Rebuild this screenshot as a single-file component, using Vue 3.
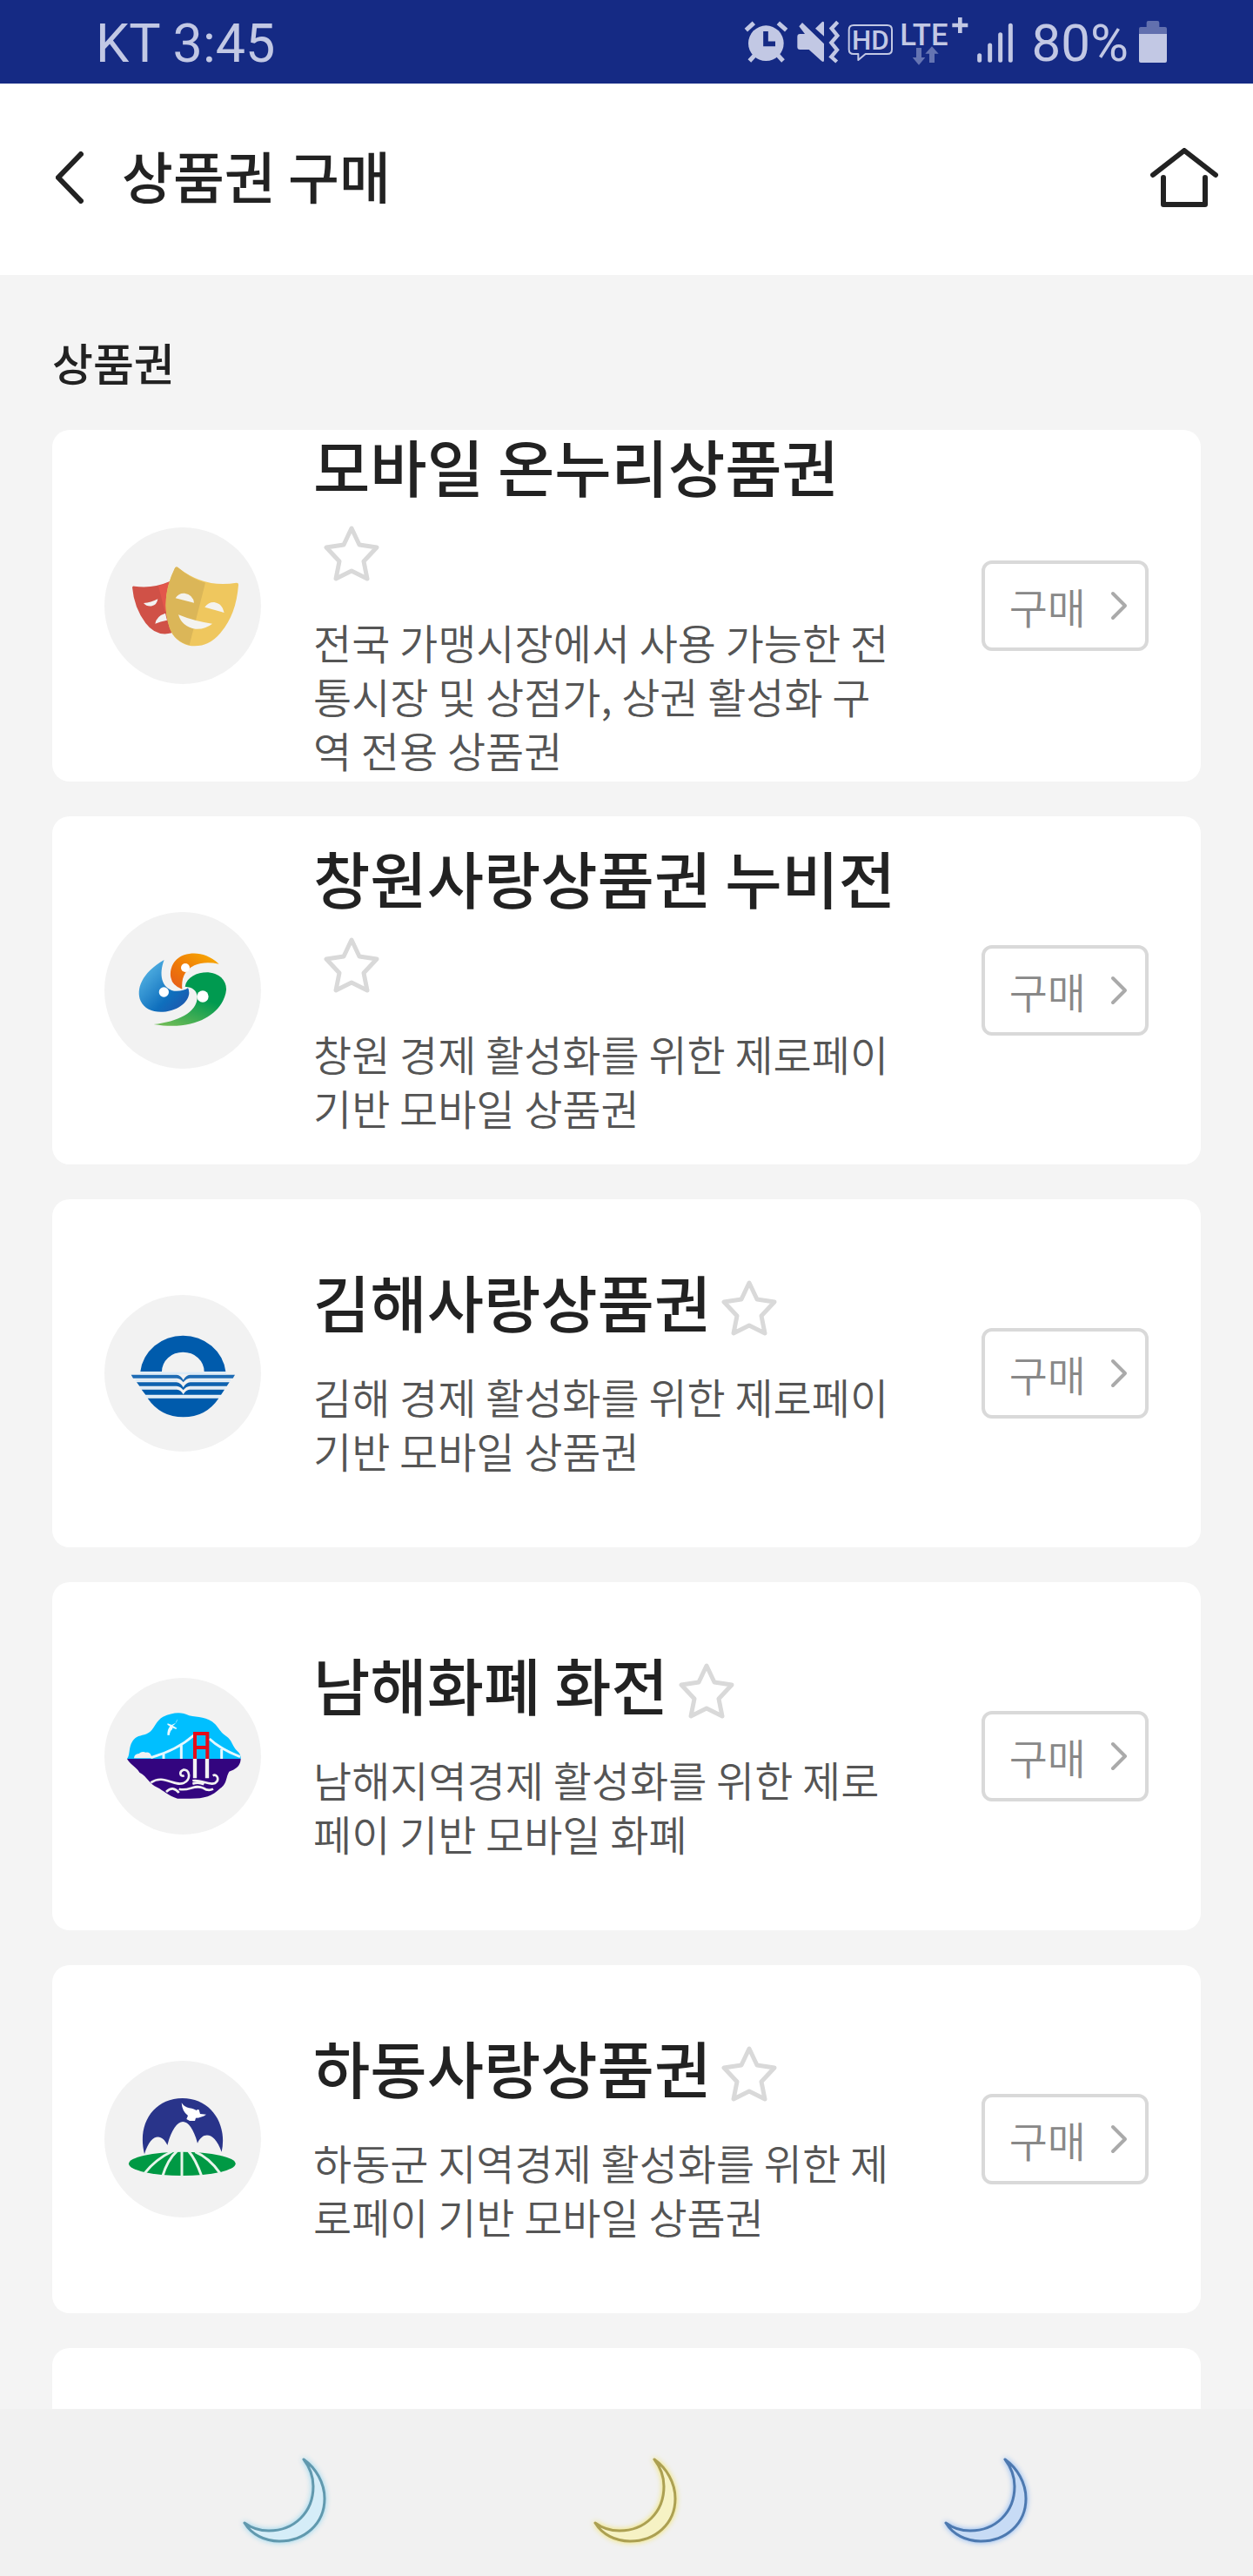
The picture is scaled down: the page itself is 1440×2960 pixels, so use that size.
<template>
  <div class="app">
    <div class="status">
      <span class="status-text carrier-text">KT 3:45</span>
      <div class="status-icons">
        <svg viewBox="45 60 153 168" width="51" height="56" aria-hidden="true">
          <g stroke="#c2c8e4" stroke-width="15" fill="none">
            <path d="M52 104l27-25M163 79l28 25M64 210l22-24M180 210l-22-24" />
          </g>
          <circle cx="121" cy="149" r="61" fill="#c2c8e4" />
          <path d="M120 108v43h33" fill="none" stroke="#152a84" stroke-width="17" />
        </svg>
        <svg viewBox="228 60 147 168" width="49" height="56" aria-hidden="true">
          <path d="M246 78l75 73v57q0 8-8 3l-44-40h-31q-9 0-9-9v-36q0-9 9-9h17l-20-26zM291 98l24-23q6-3 6 4v46z" fill="#c2c8e4" />
          <path d="M368 76l-21 22 20 25-21 24 20 25-20 24 19 17" fill="none" stroke="#c2c8e4" stroke-width="13" />
        </svg>
        <svg viewBox="402 60 153 168" width="51" height="56" aria-hidden="true">
          <path d="M420 87h116q16 0 16 16v67q0 16-16 16h-75l-25 21v-21h-16q-16 0-16-16v-67q0-16 16-16z" fill="none" stroke="#c2c8e4" stroke-width="6" stroke-linejoin="round" />
          <text x="478" y="170" text-anchor="middle" font-size="94" font-weight="500" fill="#c2c8e4">HD</text>
        </svg>
        <svg viewBox="585 60 231 168" width="77" height="56" aria-hidden="true">
          <text x="580" y="156" font-size="104" font-weight="500" fill="#c2c8e4">LTE</text>
          <path d="M787 60v54M760 87h54" stroke="#c2c8e4" stroke-width="14" />
          <path d="M636 165h18v33h13l-22 26-22-26h13zM681 216h18v-31h14l-23-25-23 25h14z" fill="#6574b2" />
        </svg>
        <svg viewBox="849 60 123 168" width="41" height="56" aria-hidden="true">
          <path d="M857 191v17M893 156v52M929 119v89M964 88v120" stroke="#c2c8e4" stroke-width="15" stroke-linecap="round" />
        </svg>
        <span class="status-text battery-text">80%</span>
        <svg viewBox="1407 60 96 168" width="32" height="56" aria-hidden="true">
          <path d="M1407 118V99q0-6 6-6h20V78q0-6 6-6h32q6 0 6 6v15h20q6 0 6 6v19z" fill="#6270ae" />
          <path d="M1407 117h96v93q0 6-6 6h-84q-6 0-6-6z" fill="#c2c8e4" />
        </svg>
      </div>
    </div>

    <header class="header">
      <a href="#" class="back" aria-label="이전">
        <svg viewBox="0 0 32 60" width="32" height="60">
          <path d="M31 1L3 30l28 29" fill="none" stroke="#222" stroke-width="6" />
        </svg>
      </a>
      <h1>상품권 구매</h1>
      <a href="#" class="home" aria-label="홈">
        <svg viewBox="0 0 78 68" width="78" height="68">
          <path d="M3 31L39 3l36 28M15 34v31h48V34" fill="none" stroke="#222" stroke-width="6" stroke-linecap="round" stroke-linejoin="round" />
        </svg>
      </a>
    </header>

    <main class="main">
      <h2 class="section-title">상품권</h2>
      <ul class="list">
        <li v-for="item in vouchers" :key="item.name" class="card">
          <div class="logo">
            <!-- masks -->
            <svg v-if="item.logo === 'masks'" viewBox="30 48 540 540">
              <path d="M126 254q2-4 8-3 62 9 122-17l6 178q-54 14-90-34-40-54-46-124z" fill="#d05147" />
              <path d="M216 250q22-5 42-17v60l-18 50z" fill="#e3564b" />
              <path d="M165 309q26-2 49-14-3 20-20 24-18 3-29-10zM205 380q4-26 35-36l6 24q-24 4-41 12z" fill="#f2f2f2" />
              <path d="M273 188q5-7 13 0 90 70 199 51 8-1 7 8-8 104-63 166-44 52-108 42-50-14-66-60-34-102 18-207z" fill="#efc75e" />
              <path d="M273 188q5-7 13 0 42 37 92 51l-55 215q-51-14-68-59-34-102 18-207z" fill="#dbb658" />
              <path d="M275 292q10-18 31-17 30 5 33 33zM376 323q12-18 33-17 28 5 34 36zM285 349q56 23 117 31-25 20-58 18-46-6-59-49z" fill="#f4f3ef" />
            </svg>

            <!-- changwon -->
            <svg v-else-if="item.logo === 'changwon'" viewBox="30 54 540 540">
              <defs>
                <linearGradient id="cw-blue" x1="0" y1="0" x2="1" y2="1">
                  <stop offset=".2" stop-color="#4aa9de" />
                  <stop offset=".65" stop-color="#0f6fbd" />
                  <stop offset="1" stop-color="#2350a8" />
                </linearGradient>
                <linearGradient id="cw-orange" x1="0" y1="1" x2="1" y2="0">
                  <stop offset="0" stop-color="#e5591c" />
                  <stop offset=".4" stop-color="#ee7808" />
                  <stop offset="1" stop-color="#f9b000" />
                </linearGradient>
                <linearGradient id="cw-green" x1=".7" y1="0" x2=".2" y2="1">
                  <stop offset=".4" stop-color="#009a50" />
                  <stop offset="1" stop-color="#6cba56" />
                </linearGradient>
              </defs>
              <path d="M236 219C158 264 138 320 155 361C168 389 198 400 232 398C288 394 322 360 322 332Q322 321 318 316Q302 328 270 326C226 316 217 268 236 219z" fill="url(#cw-blue)" />
              <path d="M425 233C390 202 356 193 322 198C273 205 253 244 259 280Q264 308 298 320C296 287 302 257 340 238Q375 222 425 233z" fill="url(#cw-orange)" />
              <path d="M308 311C314 278 350 261 388 262C430 266 451 292 450 322C444 390 361 468 200 441C282 432 351 400 350 346Q348 314 308 311z" fill="url(#cw-green)" />
              <circle cx="309" cy="246" r="15" fill="#fff" />
              <circle cx="235" cy="330" r="17" fill="#fff" />
              <circle cx="369" cy="345" r="20" fill="#fff" />
            </svg>

            <!-- gimhae -->
            <svg v-else-if="item.logo === 'gimhae'" viewBox="30 24 540 540">
              <path d="M154 288a148 140 0 0 1 294 0h-74a73 67 0 0 0-146 0z" fill="#005bac" />
              <path d="M122 299h157q14 1 23 18 9-17 23-18h155l-7 12H324q-12 1-22 14-10-13-22-14H129z" fill="#1f6cb5" />
              <path d="M141 325h137q15 1 24 18 9-17 24-18h135l-9 13H325q-13 1-23 14-10-13-23-14H151z" fill="#0d62b0" />
              <path d="M158 350h122q13 1 22 17 9-16 22-17h120l-12 18H172z" fill="#005bac" />
              <path d="M179 380h245q-44 65-122 65t-123-65z" fill="#005bac" />
              <path d="M154 294h296M137 318h145M322 318h143M154 344h126M324 344h124M174 374h254" stroke="#dcebf8" stroke-width="7" />
            </svg>

            <!-- namhae -->
            <svg v-else-if="item.logo === 'namhae'" viewBox="30 24 540 540">
              <path d="M108 303C121 290 110 255 136 232C151 219 170 224 188 209C205 193 208 172 232 158C264 144 294 139 322 154C352 160 385 157 412 184C430 205 429 210 450 225C470 237 471 261 488 276Q501 287 500 303z" fill="#00bfff" />
              <path d="M108 303H500C499 325 487 338 460 347C448 367 454 387 430 404C402 431 376 440 326 440H282C249 430 233 412 213 402C183 389 180 366 151 350C142 333 119 323 108 303z" fill="#33057f" />
              <path d="M190 299Q282 272 338 222M392 234Q430 270 498 296M234 286v17M295 256v47M434 270v33" fill="none" stroke="#e4f8ff" stroke-width="9" />
              <path d="M132 301q1-15 17-16 10-10 24-4 14-2 18 11l8 9z" fill="#f2f2f2" />
              <path d="M283 166q-7 19-17 22l-2 14q-7 3-10 20l-7-1q0-21 9-30l-9-6 1-4 14 5 13-6q3-9 8-14zM265 188l15 9-3 4-17-7z" fill="#e9faff" />
              <path d="M342 303v67M384 303v67" stroke="#f2f2f2" stroke-width="13" />
              <path d="M342 303v-87h43v87M342 264h43" fill="none" stroke="#e60b17" stroke-width="12" />
              <path d="M190 385C235 354 269 401 304 386C331 373 323 337 302 341C286 347 291 367 305 361M334 379C360 372 388 396 411 387C429 376 418 352 404 361M287 407C321 417 340 389 371 404Q388 416 405 407M243 417Q266 394 287 420M334 389Q355 382 373 391" fill="none" stroke="#f2f2f2" stroke-width="8" />
            </svg>

            <!-- hadong -->
            <svg v-else-if="item.logo === 'hadong'" viewBox="30 24 540 540">
              <path d="M168 346C142 243 198 154 299 153C398 153 455 243 434 338C409 267 369 268 351 308C324 209 276 208 247 315C229 275 191 271 168 346z" fill="#29348a" />
              <path d="M296 169q10 15 27 18 18 3 24 8 4-5 9-2l4 14 21 2q-16 11-36 12l-3 10h-18l-11-6 5-12q-20-14-22-44z" fill="#fff" />
              <ellipse cx="298" cy="379" rx="184" ry="41" fill="#009944" />
              <path d="M264 336Q208 362 168 412M281 334Q247 365 230 423M297 332v94M320 335Q344 362 365 421M343 338Q391 358 429 412" fill="none" stroke="#e8f5ec" stroke-width="9" />
              <path d="M226 339q72-12 140 0v-8H226z" fill="#f2f2f2" />
            </svg>
          </div>

          <div class="info">
            <div class="name-row">
              <h3>{{ item.name }}</h3>
              <button
                type="button"
                class="star"
                :aria-label="item.name + ' 즐겨찾기'"
                :aria-pressed="item.favorite"
                @click="item.favorite = !item.favorite"
              >
                <svg viewBox="0 0 64 64" width="64" height="64">
                  <path d="M32 3l9 19 20 3-15 16 4 20-18-9-18 9 4-20L3 25l20-3z" :fill="item.favorite ? '#d9d9d9' : 'none'" stroke="#d9d9d9" stroke-width="5" stroke-linejoin="round" />
                </svg>
              </button>
            </div>
            <p>{{ item.desc }}</p>
          </div>

          <button type="button" class="buy">
            구매
            <svg viewBox="0 0 20 34" width="20" height="34" aria-hidden="true">
              <path d="M3 3l14 14L3 31" fill="none" stroke="#aaa" stroke-width="4" stroke-linecap="round" stroke-linejoin="round" />
            </svg>
          </button>
        </li>
        <li class="card"></li>
      </ul>
    </main>

    <nav class="nav">
      <button v-for="moon in moons" :key="moon.label" type="button" :aria-label="moon.label">
        <svg viewBox="0 0 94 98" width="94" height="98" :class="moon.cls">
          <path d="M69 1C83 11 93 28 93 46C93 75 70 95 41 95C24 95 9 87 1 74C9 80 19 83 29 83C58 83 80 62 80 32C80 20 76 10 69 1z" />
        </svg>
      </button>
    </nav>
  </div>
</template>

<script setup>
import { ref } from 'vue'

const vouchers = ref([
  {
    logo: 'masks',
    name: '모바일 온누리상품권',
    desc: '전국 가맹시장에서 사용 가능한 전통시장 및 상점가, 상권 활성화 구역 전용 상품권',
    favorite: false
  },
  {
    logo: 'changwon',
    name: '창원사랑상품권 누비전',
    desc: '창원 경제 활성화를 위한 제로페이 기반 모바일 상품권',
    favorite: false
  },
  {
    logo: 'gimhae',
    name: '김해사랑상품권',
    desc: '김해 경제 활성화를 위한 제로페이 기반 모바일 상품권',
    favorite: false
  },
  {
    logo: 'namhae',
    name: '남해화폐 화전',
    desc: '남해지역경제 활성화를 위한 제로페이 기반 모바일 화폐',
    favorite: false
  },
  {
    logo: 'hadong',
    name: '하동사랑상품권',
    desc: '하동군 지역경제 활성화를 위한 제로페이 기반 모바일 상품권',
    favorite: false
  }
])

const moons = [
  { label: '최근 앱', cls: 'moon-cyan' },
  { label: '홈 화면', cls: 'moon-yellow' },
  { label: '뒤로', cls: 'moon-blue' }
]
</script>

<style>
body {
  margin: 0;
  background: #f4f4f4;
}
</style>

<style scoped>
.app {
  display: flex;
  flex-direction: column;
  height: 100vh;
  background: #f4f4f4;
  color: #222;
  font-family: "Noto Sans CJK KR", "Noto Sans", sans-serif;
}

h1, h2, h3, p, ul {
  margin: 0;
  padding: 0;
}

button {
  padding: 0;
  border: 0;
  background: none;
  font: inherit;
  cursor: pointer;
}

svg {
  display: block;
  flex: none;
}

/* status bar */
.status {
  display: flex;
  flex: none;
  align-items: center;
  justify-content: space-between;
  height: 96px;
  padding: 0 99px 0 110px;
  background: #152a84;
  font-family: Roboto, sans-serif;
}

.status-text {
  padding-top: 4px;
  color: #c2c8e4;
  font-size: 60px;
  line-height: 72px;
}

.carrier-text {
  font-size: 61px;
}

.status-icons {
  display: flex;
  align-items: center;
  gap: 10px;
}

.status-icons svg {
  overflow: visible;
}

.battery-text {
  margin: 0 2px 0 12px;
}

/* header */
.header {
  display: flex;
  flex: none;
  align-items: center;
  height: 216px;
  padding: 0 40px 4px 64px;
  background: #fff;
}

.header h1 {
  flex: 1;
  margin: 0 0 8px 44px;
  font-size: 64px;
  font-weight: 500;
  line-height: 92px;
}

/* list */
.main {
  flex: 1;
  min-height: 0;
  overflow: hidden;
  padding: 62px 60px 0;
}

.section-title {
  margin-bottom: 40px;
  font-size: 51px;
  font-weight: 500;
  line-height: 76px;
}

.list {
  display: flex;
  flex-direction: column;
  gap: 40px;
  list-style: none;
}

.card {
  display: flex;
  align-items: center;
  box-sizing: border-box;
  min-height: 400px;
  padding: 0 60px;
  border-radius: 20px;
  background: #fff;
}

.logo {
  flex: none;
  width: 180px;
  height: 180px;
  border-radius: 50%;
  background: #f2f2f2;
}

.info {
  flex: 1;
  min-width: 0;
  margin: -6px 88px 6px 60px;
}

.name-row {
  display: flex;
  flex-wrap: wrap;
}

.name-row h3 {
  font-size: 71px;
  font-weight: 500;
  line-height: 93px;
}

.star {
  margin: 23px 0 6px 12px;
}

.info p {
  margin-top: 32px;
  color: #555;
  font-size: 48px;
  font-weight: 350;
  line-height: 62px;
  word-break: break-all;
}

.buy {
  display: flex;
  flex: none;
  align-items: center;
  gap: 28px;
  height: 104px;
  padding: 0 20px 0 28px;
  border: 4px solid #d9d9d9;
  border-radius: 12px;
  color: #888;
  font-size: 48px;
  font-weight: 350;
}

/* bottom navigation */
.nav {
  display: grid;
  flex: none;
  grid-template-columns: repeat(3, 1fr);
  align-items: center;
  justify-items: center;
  box-sizing: border-box;
  height: 192px;
  padding: 20px 106px 0 126px;
  background: #f1f1f1;
}

.nav svg {
  overflow: visible;
  stroke-width: 3;
  stroke-linejoin: round;
}

.moon-cyan {
  fill: #d5edf8;
  stroke: #6199ae;
  filter: drop-shadow(0 0 3px #8ed3ee);
}

.moon-yellow {
  fill: #f6f2c4;
  stroke: #aca052;
  filter: drop-shadow(0 0 3px #f0e264);
}

.moon-blue {
  fill: #c7dbf5;
  stroke: #4d79b0;
  filter: drop-shadow(0 0 3px #82b2f2);
}
</style>
